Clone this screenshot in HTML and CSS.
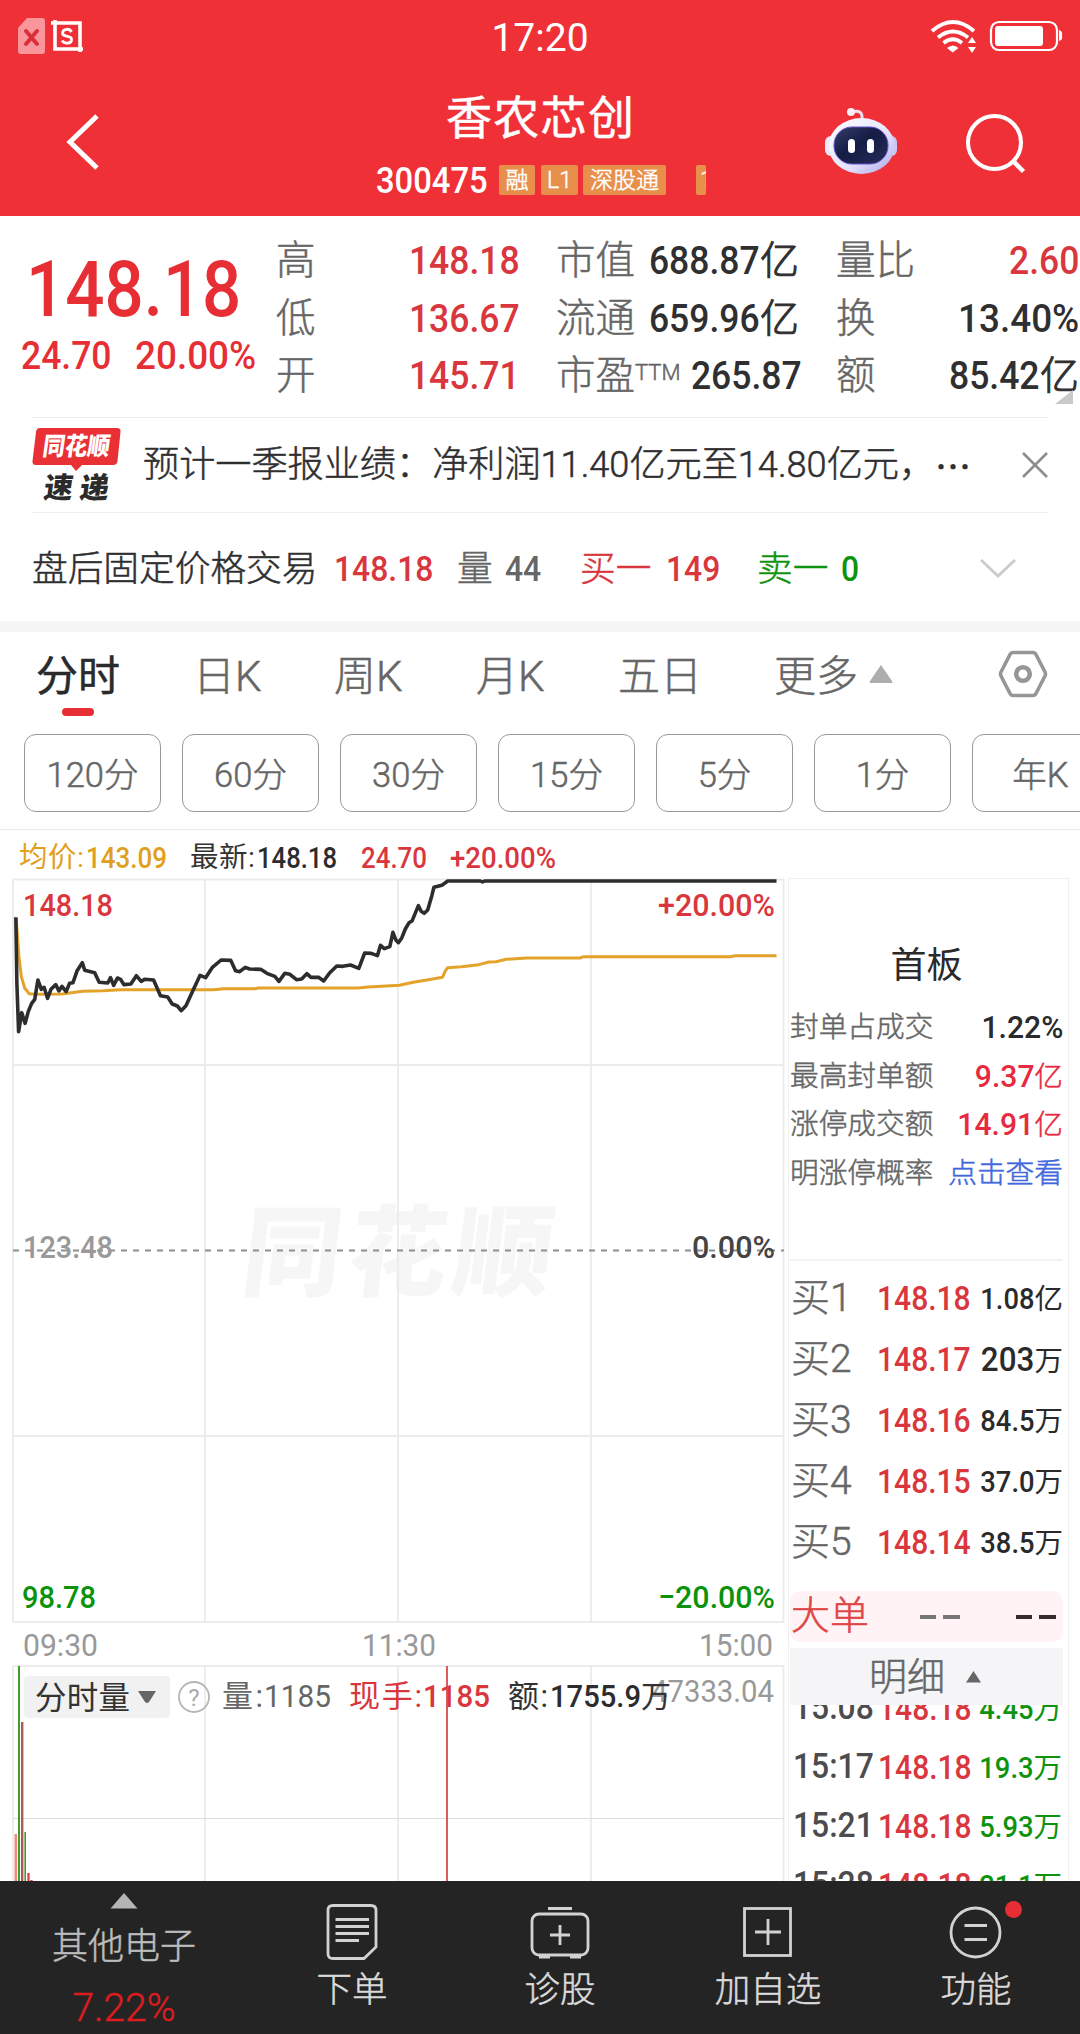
FILE: index.html
```html
<!DOCTYPE html>
<html lang="zh-CN">
<head>
<meta charset="utf-8">
<title>香农芯创 300475</title>
<link rel="stylesheet" href="styles.css">
</head>
<body>
<div class="screen">
  <header class="top">
    <div class="status">
      <svg class="status-left" width="90" height="56" viewBox="0 0 90 56">
        <path d="M27 18H42q3 0 3 3V51q0 3-3 3H21q-3 0-3-3V28z" fill="#f9959b"/>
        <path d="M26 31l11 13M37 31L26 44" stroke="#d92f3c" stroke-width="4" stroke-linecap="round"/>
        <path d="M51 23H80V52M55 20V49H83" fill="none" stroke="#fff" stroke-width="3.6"/>
        <path d="M71.500 32q-1.500-3-4.500-2.700c-5 .2-6 5.500-1.500 6.500 5 1 6.500 2 6 4.500-1 4-8 3.500-9.300.2" fill="none" stroke="#fff" stroke-width="2.800"/>
      </svg>
      <time class="clock">17:20</time>
      <svg class="status-right" width="150" height="56" viewBox="930 0 150 56">
        <g fill="none" stroke="#fff" stroke-width="3.800">
          <path d="M932 31q21-18 42 0"/><path d="M938 37.500q15-12 30 0"/><path d="M943.500 43q9.500-7.500 18.500 0"/>
        </g>
        <path d="M947 48q6-5 11.500 0L952.700 52.500z" fill="#fff"/>
        <path d="M972 37l4 6h-8zM972 53l4-6h-8z" fill="#fff"/>
        <rect x="991" y="22" width="66" height="28" rx="8" fill="none" stroke="#fff" stroke-width="2.200"/>
        <rect x="995" y="26" width="48" height="20" rx="3" fill="#fff"/>
        <path d="M1059 30q4 1 3 6 1 4-3 5z" fill="#fff"/>
      </svg>
    </div>
    <div class="titlebar">
      <svg class="back" width="120" height="160" viewBox="0 56 120 160"><path d="M97 116L70 142L97 168" fill="none" stroke="#fff" stroke-width="5"/></svg>
      <div class="name">
        <h1>香农芯创</h1>
        <div class="code"><span class="code-num"><b class="num">300475</b></span><span class="tag tag-r">融</span><span class="tag tag-l">L1</span><span class="tag tag-s">深股通</span><span class="tag tag-cut">1</span></div>
      </div>
      <svg class="actions" width="280" height="160" viewBox="800 56 280 160">
        <defs>
          <linearGradient id="shell" x1="0" y1="0" x2="1" y2="1"><stop offset="0" stop-color="#fff"/><stop offset=".6" stop-color="#e4e2fa"/><stop offset="1" stop-color="#a9a4ea"/></linearGradient>
          <linearGradient id="visor" x1="0" y1="0" x2="1" y2="1"><stop offset="0" stop-color="#363d69"/><stop offset=".45" stop-color="#151d45"/><stop offset="1" stop-color="#252c5a"/></linearGradient>
        </defs>
        <path d="M852 112q11-3 10 7" fill="none" stroke="#f3dfee" stroke-width="3"/>
        <circle cx="851" cy="112" r="4" fill="#fbeef5"/>
        <rect x="825" y="136" width="12" height="20" rx="6" fill="#e9e8fb"/><rect x="886" y="136" width="11" height="20" rx="6" fill="#c7c8f5"/>
        <ellipse cx="861.500" cy="146" rx="33" ry="28" fill="url(#shell)"/>
        <rect x="834" y="127" width="54" height="37" rx="18" fill="url(#visor)" stroke="#6651cf" stroke-width="1"/>
        <rect x="848" y="139" width="7" height="14" rx="3.500" fill="#fff"/><rect x="867" y="139" width="7" height="14" rx="3.500" fill="#fff"/>
        <circle cx="994.500" cy="142.500" r="26.500" fill="none" stroke="#fff" stroke-width="4"/>
        <path d="M1013 161L1023.500 171.500" stroke="#fff" stroke-width="4.500"/>
      </svg>
    </div>
  </header>

  <section class="quote">
    <div class="price">
      <div class="last"><b class="num">148.18</b></div>
      <div class="change"><span><b class="num">24.70</b></span><span><b class="num pct">20.00%</b></span></div>
    </div>
    <dl class="stats">
      <div><dt>高</dt><dd class="up"><b class="num">148.18</b></dd></div>
      <div><dt>市值</dt><dd><b class="num">688.87</b><i>亿</i></dd></div>
      <div><dt>量比</dt><dd class="up"><b class="num">2.60</b></dd></div>
      <div><dt>低</dt><dd class="up"><b class="num">136.67</b></dd></div>
      <div><dt>流通</dt><dd><b class="num">659.96</b><i>亿</i></dd></div>
      <div><dt>换</dt><dd><b class="num pct">13.40%</b></dd></div>
      <div><dt>开</dt><dd class="up"><b class="num">145.71</b></dd></div>
      <div><dt>市盈<span class="ttm">TTM</span></dt><dd><b class="num">265.87</b></dd></div>
      <div><dt>额</dt><dd><b class="num">85.42</b><i>亿</i></dd></div>
    </dl>
    <svg class="corner" width="18" height="14"><path d="M18 0V14H0z" fill="#c9c9c9"/></svg>
  </section>

  <section class="news">
    <svg class="news-logo" width="94" height="86" viewBox="0 0 94 86">
      <path d="M8 10H85q4 0 3.500 4L85.500 43q-.5 4-4.500 4H50l-6 6-5-6H4q-4 0-3.500-4L4 14q.5-4 4-4z" fill="#e93035"/>
      <g transform="skewX(-8)" class="logo-font"><text x="15" y="37" textLength="67" lengthAdjust="spacingAndGlyphs" font-size="25" fill="#fff">同花顺</text><text x="22" y="80" textLength="65" font-size="29" fill="#2b2b2b">速递</text></g>
    </svg>
    <p>预计一季报业绩：净利润11.40亿元至14.80亿元，</p>
    <span class="dots">⋯</span>
    <svg class="close" width="26" height="26"><path d="M1 1L25 25M25 1L1 25" stroke="#8d8d8d" stroke-width="2.600"/></svg>
  </section>

  <section class="after">
    <span class="a1">盘后固定价格交易</span><span class="a2 up"><b class="num">148.18</b></span><span class="a3">量</span><span class="a4"><b class="num">44</b></span><span class="a5 up">买一</span><span class="a6 up"><b class="num">149</b></span><span class="a5 down">卖一</span><span class="a7 down"><b class="num">0</b></span>
    <svg width="36" height="22"><path d="M1 2L18 18L35 2" fill="none" stroke="#ccc" stroke-width="3"/></svg>
  </section>

  <nav class="tabs">
    <span class="t1 active">分时</span><span class="t2">日K</span><span class="t3">周K</span><span class="t4">月K</span><span class="t5">五日</span><span class="t6">更多</span>
    <svg class="tri" width="24" height="20"><path d="M12 1L23 17q1 2-1 2H2q-2 0-1-2z" fill="#adadad"/></svg>
    <svg class="gear" width="50" height="50"><path d="M15 3.500H35q2 0 3 2L47 23q1 2 0 4L38 44.500q-1 2-3 2H15q-2 0-3-2L3 27q-1-2 0-4L12 5.500q1-2 3-2z" fill="none" stroke="#969696" stroke-width="3.600"/><circle cx="25" cy="25" r="6.800" fill="none" stroke="#969696" stroke-width="4.600"/></svg>
  </nav>
  <div class="periods"><span>120分</span><span>60分</span><span>30分</span><span>15分</span><span>5分</span><span>1分</span><span>年K</span></div>

  <main class="market">
    <svg class="chart" width="788" height="1051" viewBox="0 830 788 1051">
      <g class="watermark" transform="translate(239 1288) skewX(-7)"><text x="0" y="0" textLength="310" font-size="99">同花顺</text></g>
      <g class="legend">
        <text x="19" y="867" textLength="65" font-size="28.500" fill="#e0a01d">均价:</text><text class="n" lengthAdjust="spacingAndGlyphs" x="86" y="867.500" textLength="81" fill="#e0a01d">143.09</text>
        <text x="190" y="867" textLength="65" font-size="28.500" fill="#333">最新:</text><text class="n" lengthAdjust="spacingAndGlyphs" x="257" y="867.500" textLength="80" fill="#2c2c2e">148.18</text>
        <text class="n" lengthAdjust="spacingAndGlyphs" x="361" y="867.500" textLength="66" fill="#d9363d">24.70</text>
        <text class="n" lengthAdjust="spacingAndGlyphs" x="450" y="867.500" textLength="106" fill="#d9363d">+20.00%</text>
      </g>
      <g fill="none" stroke="#ebebeb" stroke-width="1.800">
        <path d="M13 879.500H784M13 1065H784M13 1436H784M13 1622H784"/>
        <path d="M13 879V1622M205 879V1622M398 879V1622M591 879V1622M783.500 879V1622"/>
        <path d="M13 1666H784M13 1666V1881M205 1666V1881M398 1666V1881M591 1666V1881M783.500 1666V1881"/>
        <path d="M13 1818.500H784" stroke="#dcdcdc" stroke-width="1.200"/>
      </g>
      <path d="M13 1250.500H784" stroke="#8e8e8e" stroke-width="1.800" stroke-dasharray="6 6"/>
      <g transform="translate(0 620) scale(.34436 .33333)" fill="none" stroke-linejoin="round">
        <path class="line" stroke="#e3a32a" stroke-width="3" d="M47 895L55 1010L62 1070L72 1105L85 1121L110 1123L180 1122L240 1114L300 1112L350 1109H620L650 1106H740L750 1104H1040L1070 1101L1110 1099L1160 1096L1200 1087L1240 1080L1285 1072L1292 1055L1300 1043L1340 1040L1390 1034L1420 1026L1440 1025L1470 1018L1530 1014H1685L1695 1010H2120L2135 1007H2255"/>
        <path class="line" stroke="#2d2d2f" stroke-width="3.600" d="M46 892L49 1090L54 1235L63 1178L73 1210L82 1175L92 1150L101 1138L110 1080L120 1108L128 1102L138 1135L148 1108L162 1094L171 1113L180 1099L192 1115L202 1090L212 1088L224 1052L239 1028L246 1051L275 1058L288 1087L313 1089L321 1073L330 1096L341 1074L350 1078L360 1094L380 1092L396 1067L410 1084L420 1078L446 1080L452 1094L466 1127L487 1131L500 1152L515 1158L526 1172L540 1157L560 1112L581 1066L597 1073L616 1043L642 1020L670 1021L684 1052L696 1055L712 1042L725 1047L757 1048L775 1060L798 1069L810 1084L827 1060L842 1063L861 1079L876 1077L891 1061L903 1072L925 1072L940 1083L957 1059L978 1038L995 1039L1018 1035L1042 1045L1059 999L1078 1000L1096 1007L1105 976L1116 986L1132 980L1141 937L1150 961L1157 968L1167 953L1177 927L1188 908L1197 902L1215 857L1223 874L1232 880L1242 870L1254 827L1260 802L1283 796L1300 783H1395L1401 786L1407 783H2255"/>
      </g>
      <g class="axis">
        <text x="23" y="915.500" textLength="90" lengthAdjust="spacingAndGlyphs" fill="#d9363d">148.18</text><text x="658" y="915.500" textLength="117" lengthAdjust="spacingAndGlyphs" fill="#d9363d">+20.00%</text>
        <text x="23" y="1257.500" textLength="90" lengthAdjust="spacingAndGlyphs" fill="#999">123.48</text><text x="692" y="1257.500" textLength="83" lengthAdjust="spacingAndGlyphs" fill="#444">0.00%</text>
        <text x="22" y="1607.500" textLength="74" lengthAdjust="spacingAndGlyphs" fill="#0b930b">98.78</text><text x="658" y="1607.500" textLength="117" lengthAdjust="spacingAndGlyphs" fill="#0b930b">−20.00%</text>
        <g fill="#999" class="time"><text x="23" y="1656" textLength="75" lengthAdjust="spacingAndGlyphs">09:30</text><text x="362" y="1656" textLength="74" lengthAdjust="spacingAndGlyphs">11:30</text><text x="699" y="1656" textLength="74" lengthAdjust="spacingAndGlyphs">15:00</text></g>
      </g>
      <path d="M15.800 1834V1881" stroke="#f08a80" stroke-width="2.600"/><path d="M19 1666V1881" stroke="#409d2c" stroke-width="2"/><path d="M22.200 1722V1881" stroke="#ae5757" stroke-width="2.400"/><path d="M25.200 1832V1881" stroke="#409d2c" stroke-width="1.600"/><path d="M28.500 1873V1881M31.500 1880V1881" stroke="#d9363d" stroke-width="2.200"/>
      <rect x="24" y="1676" width="146" height="42" rx="4" fill="#f1f1f1"/>
      <text x="35" y="1709" textLength="95" font-size="31.500" fill="#333">分时量</text>
      <path d="M138 1691H156L149 1702q-2 2-4 0z" fill="#666"/>
      <circle cx="194" cy="1697" r="15" fill="none" stroke="#b5b5b5" stroke-width="1.800"/><text x="194" y="1705.500" font-size="24" text-anchor="middle" fill="#aaa">?</text>
      <g class="vol">
        <text x="222" y="1707" textLength="41" font-size="31" fill="#666">量:</text><text class="n soft" lengthAdjust="spacingAndGlyphs" x="264" y="1707" textLength="67" fill="#666">1185</text>
        <text x="349" y="1707" textLength="73" font-size="31" fill="#d9363d">现手:</text><text class="n" lengthAdjust="spacingAndGlyphs" x="423" y="1707" textLength="67" fill="#d9363d">1185</text>
        <text class="n soft" lengthAdjust="spacingAndGlyphs" x="651" y="1702" textLength="123" fill="#999">47333.04</text>
        <text x="508" y="1707" textLength="40" font-size="31" fill="#333">额:</text><text class="n" lengthAdjust="spacingAndGlyphs" x="550" y="1707" textLength="91" fill="#2c2c2e">1755.9</text><text x="641" y="1707" font-size="30" fill="#333">万</text>
      </g>
      <path d="M447 1666V1881" stroke="#d84a4a" stroke-width="1.800"/>
    </svg>

    <aside class="side">
      <h2>首板</h2>
      <div class="limit">
        <div><span>封单占成交</span><em><b class="num">1.22%</b></em></div>
        <div><span>最高封单额</span><em class="hot"><b class="num">9.37</b>亿</em></div>
        <div><span>涨停成交额</span><em class="hot"><b class="num">14.91</b>亿</em></div>
        <div><span>明涨停概率</span><em class="link">点击查看</em></div>
      </div>
      <div class="bids">
        <div><span>买1</span><em class="up"><b class="num">148.18</b></em><i><b class="num">1.08</b>亿</i></div>
        <div><span>买2</span><em class="up"><b class="num">148.17</b></em><i><b class="num big">203</b>万</i></div>
        <div><span>买3</span><em class="up"><b class="num">148.16</b></em><i><b class="num">84.5</b>万</i></div>
        <div><span>买4</span><em class="up"><b class="num">148.15</b></em><i><b class="num">37.0</b>万</i></div>
        <div><span>买5</span><em class="up"><b class="num">148.14</b></em><i><b class="num">38.5</b>万</i></div>
      </div>
      <div class="large"><span>大单</span><u class="grey"></u><u class="grey"></u><u class="dark"></u><u class="dark"></u></div>
      <div class="detail"><span>明细</span><svg width="15" height="12"><path d="M7.500 0L15 11.500H0z" fill="#666"/></svg></div>
      <div class="ticks">
        <div><span><b class="num">15:08</b></span><em class="up"><b class="num">148.18</b></em><i><b class="num">4.45</b>万</i></div>
        <div><span><b class="num">15:17</b></span><em class="up"><b class="num">148.18</b></em><i><b class="num">19.3</b>万</i></div>
        <div><span><b class="num">15:21</b></span><em class="up"><b class="num">148.18</b></em><i><b class="num">5.93</b>万</i></div>
        <div><span><b class="num">15:28</b></span><em class="up"><b class="num">148.18</b></em><i><b class="num">21.1</b>万</i></div>
      </div>
    </aside>
  </main>

  <footer class="dock">
    <div class="sector"><svg width="28" height="16"><path d="M14 0L27.500 15.500H.5z" fill="#b5b5b5"/></svg><span>其他电子</span><strong>7.22%</strong></div>
    <div class="item"><svg width="60" height="60"><path d="M11 4.500H49q5 0 5 5V46L42 57.500H11q-5 0-5-5V9.500q0-5 5-5z" fill="none"/><path d="M13.500 18.500H47M13.500 25.500H47M13.500 32.500H47M13.500 39.500H37" /></svg><span>下单</span></div>
    <div class="item"><svg width="60" height="60"><rect x="2" y="13" width="56" height="41" rx="7" fill="none"/><path d="M18 7.500H42M30 24V44M20 34H40M9 56H20M40 56H51"/></svg><span>诊股</span></div>
    <div class="item"><svg width="60" height="60"><rect x="6.500" y="7.500" width="46" height="47" fill="none"/><path d="M30 18V44M17 31H43"/></svg><span>加自选</span></div>
    <div class="item"><svg width="60" height="60"><circle cx="29.500" cy="31.500" r="24.500" fill="none"/><path d="M18.500 24.500H41M18.500 38.500H41"/></svg><span>功能</span><b class="dot"></b></div>
  </footer>
</div>
</body>
</html>
```
FILE: styles.css
```css
* { box-sizing: border-box; margin: 0; padding: 0; }
body { width: 1080px; height: 2034px; overflow: hidden; background: #fff; color: #2f2f31; font-family: Roboto, "Noto Sans CJK SC", sans-serif; font-weight: 300; -webkit-text-stroke: .5px currentColor; }
i, em { font-style: normal; }
svg { display: block; flex: none; }
svg text { -webkit-text-stroke: 0; }
.screen { width: 1080px; height: 2034px; overflow: hidden; display: flex; flex-direction: column; }
.num { display: inline-block; font-weight: 500; transform: scaleX(.91); transform-origin: left center; -webkit-text-stroke: 0; }
.up { color: #d9363d !important; }
.down { color: #0f930f !important; }

.top { height: 216px; flex: none; background: #f03037; color: #fff; }
.status { height: 56px; display: grid; grid-template-columns: 150px 1fr 150px; }
.clock { text-align: center; font-size: 39px; font-weight: 400; line-height: 76px; height: 56px; -webkit-text-stroke: 0; }
.titlebar { height: 160px; display: grid; grid-template-columns: 120px 1fr 280px; }
.name { padding: 33px 0 0 256px; }
.name h1 { font-size: 46px; font-weight: 400; letter-spacing: 1.300px; line-height: 58px; padding-left: 70px; white-space: nowrap; }
.code { display: flex; height: 30px; margin-top: 18px; }
.code-num { width: 123px; font-size: 36px; line-height: 32px; }
.tag { height: 30px; line-height: 31px; background: #e78f4b; border-radius: 2px; font-size: 23px; text-align: center; overflow: hidden; }
.tag-r { width: 36px; }
.tag-l { width: 37px; margin-left: 6px; }
.tag-s { width: 83px; margin-left: 5px; }
.tag-cut { width: 10px; margin-left: 30px; padding-left: 4px; text-align: left; }

.quote { height: 201px; flex: none; display: flex; padding-top: 16px; position: relative; }
.price { width: 276px; color: #e62e34; }
.last { height: 80px; line-height: 80px; margin-top: 18px; padding-left: 26px; font-size: 78px; }
.last .num { transform: scaleX(.885); }
.change { display: flex; height: 50px; line-height: 52px; padding-left: 21px; font-size: 39px; }
.change span { width: 114px; }
.pct { transform: scaleX(.945); }
.stats { display: grid; grid-template-columns: 244px 244px 243px; grid-auto-rows: 57.500px; column-gap: 36px; width: 803px; }
.stats > div { display: flex; justify-content: space-between; line-height: 58px; font-size: 39px; white-space: nowrap; }
.stats > div:nth-child(3n+2) dd { padding-right: 1px; }
dt { color: #666; font-size: 39.500px; }
.ttm { font-size: 22px; vertical-align: 9px; line-height: 1; }
dd .num, .limit .num, .bids i .num, .ticks i .num { transform-origin: right center; }
dd i { -webkit-text-stroke: 1px currentColor; }
.corner { position: absolute; right: 7px; bottom: 13px; }

.news { height: 96px; flex: none; margin: 0 32px; border-top: 1.500px solid #ececec; border-bottom: 1.500px solid #ececec; display: flex; align-items: center; }
.news-logo { align-self: flex-start; }
.logo-font, .watermark { font-family: "Noto Sans CJK SC", sans-serif; font-weight: 900; }
.news p { width: 810px; padding-left: 17px; font-size: 36.150px; white-space: nowrap; line-height: 98px; }
.dots { width: 93px; font-size: 36px; font-weight: 400; }

.after { height: 108px; flex: none; display: flex; align-items: center; padding: 4px 32px 0; font-size: 35.700px; white-space: nowrap; line-height: 60px; }
.after .num { font-size: 35px; }
.a1 { width: 302px; }
.a2 { width: 123px; }
.a3, .a4 { color: #666; }
.a3 { width: 48px; }
.a4 { width: 75px; }
.a5 { width: 86px; }
.a6 { width: 91px; }
.a7 { width: 139px; margin-left: -2px; }

.tabs { height: 113px; flex: none; border-top: 11px solid #f5f5f5; display: flex; font-size: 42px; line-height: 89px; color: #666; white-space: nowrap; }
.tabs span { flex: none; }
.t1 { width: 159px; padding-left: 36px; position: relative; }
.tabs .active { color: #2a2a2c; font-weight: 400; }
.active::after { content: ""; position: absolute; left: 62px; top: 76px; width: 32px; height: 8px; border-radius: 4px; background: #e62e34; }
.t2 { width: 175px; padding-left: 34px; }
.t3 { width: 142px; }
.t4 { width: 142px; }
.t5 { width: 156px; }
.t6 { width: 95px; }
.tri { margin: 32px 105px 0 0; }
.gear { margin-top: 17px; }
.periods { height: 96px; flex: none; display: flex; gap: 21px; padding: 0 0 0 24px; border-bottom: 1.500px solid #ebebeb; overflow: hidden; }
.periods span { flex: none; width: 137px; height: 78px; border: 1.300px solid #999; border-radius: 12px; text-align: center; line-height: 80px; font-size: 34.500px; color: #666; }

.market { height: 1051px; flex: none; display: flex; }
.chart { font-family: Roboto, "Noto Sans CJK SC", sans-serif; font-weight: 400; }
.line { vector-effect: non-scaling-stroke; }
.watermark { fill: #f6f6f6; }
.legend .n { font-size: 30px; font-weight: 500; }
.axis { font-size: 32px; font-weight: 500; }
.time { font-weight: 400; }
.vol .n { font-size: 32px; font-weight: 500; }
.vol .soft { font-weight: 400; }
.side { width: 281px; height: 1003px; margin-top: 48px; border: 1.500px solid #f0f0f0; border-bottom: 0; padding: 57px 5px 0 1px; overflow: hidden; color: #2a2a2c; white-space: nowrap; }
.side h2 { height: 60px; text-align: center; font-size: 36px; font-weight: 400; line-height: 60px; -webkit-text-stroke: 0; }
.limit { height: 265px; padding-top: 7px; border-bottom: 2px solid #f2f2f2; }
.limit div { display: flex; justify-content: space-between; height: 48.500px; line-height: 49px; font-size: 28.700px; }
.limit span { color: #666; }
.limit .num { font-size: 31px; transform: scaleX(.97); }
.limit .hot { color: #e82a40; }
.limit .link { color: #4169dc; }
.bids { height: 330px; padding-top: 7px; }
.bids div { display: grid; grid-template-columns: 87px 90px 1fr; height: 61px; line-height: 61px; font-size: 28.500px; }
.bids span { font-size: 39px; color: #666; padding-left: 1px; }
.bids em { font-size: 33px; line-height: 62px; }
.bids i, .ticks i { text-align: right; font-weight: 400; line-height: 62px; -webkit-text-stroke: 0; }
.bids i .num { font-size: 30px; }
.bids i .big { font-size: 33px; transform: scaleX(.95); }
.large { height: 51px; background: #fff3f5; border-radius: 10px; display: flex; align-items: center; color: #e04545; font-size: 39px; line-height: 51px; }
.large span { width: 133px; padding-left: 1px; line-height: 53px; }
.large u { width: 17px; height: 4px; margin-right: 7px; background: #777; }
.large .dark { background: #362c2e; }
.large .grey + .dark { margin-left: 49px; }
.detail { height: 57px; margin-top: 6px; padding-right: 3px; background: #f5f4f6; display: flex; align-items: center; justify-content: center; gap: 21px; color: #666; font-size: 38px; line-height: 62px; }
.ticks { margin-top: -27px; clip-path: inset(27px 0 0); }
.ticks div { display: grid; grid-template-columns: 88px 90px 1fr; height: 59px; line-height: 59px; font-size: 28.500px; padding-right: 1px; }
.ticks span { font-size: 35px; color: #4c4c4e; padding-left: 3px; }
.ticks em { font-size: 33px; line-height: 61px; }
.ticks i { color: #0f930f; line-height: 61px; }
.ticks i .num { font-size: 30px; }

.dock { height: 153px; flex: none; background: #242424; display: grid; grid-template-columns: 248px repeat(4, 208px); color: #dadada; }
.sector { display: flex; flex-direction: column; align-items: center; padding-top: 12px; font-size: 36px; line-height: 50px; }
.sector span { margin-top: 13px; color: #bcbcbc; }
.sector strong { margin-top: 11px; color: #dc1c1f; font-weight: 300; font-size: 39px; }
.item { position: relative; display: flex; flex-direction: column; align-items: center; padding-top: 20px; font-size: 35.500px; line-height: 50px; }
.item svg { stroke: #d2d2d2; stroke-width: 2.800; }
.item span { margin-top: 4px; }
.dot { position: absolute; left: 133px; top: 20px; width: 17px; height: 17px; border-radius: 50%; background: #e62e34; }
```
